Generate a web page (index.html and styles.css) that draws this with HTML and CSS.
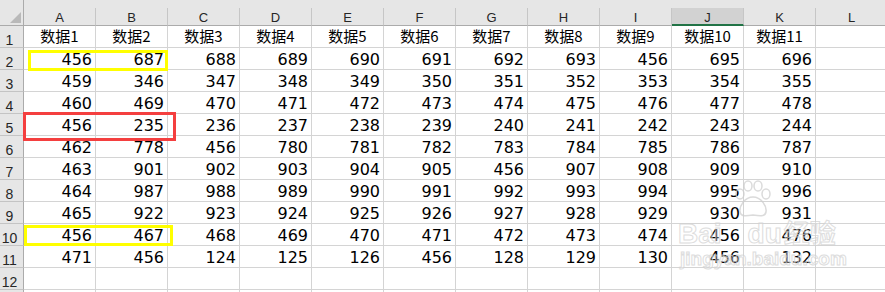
FILE: index.html
```html
<!DOCTYPE html>
<html lang="zh">
<head>
<meta charset="utf-8">
<title>Sheet</title>
<link rel="stylesheet" href="styles.css">
</head>
<body>
<div class="sheet">
  <div class="hrow">
    <div class="corner"><svg width="24" height="26" viewBox="0 0 24 26"><polygon points="21,12 21,23 10,23" fill="#b9b9b9"/></svg></div>
    <div class="ch">A</div><div class="ch">B</div><div class="ch">C</div><div class="ch">D</div><div class="ch">E</div><div class="ch">F</div><div class="ch">G</div><div class="ch">H</div><div class="ch">I</div><div class="ch sel">J</div><div class="ch">K</div><div class="ch">L</div>
  </div>
  <div class="row"><div class="rh">1</div><div class="c t">数据1</div><div class="c t">数据2</div><div class="c t">数据3</div><div class="c t">数据4</div><div class="c t">数据5</div><div class="c t">数据6</div><div class="c t">数据7</div><div class="c t">数据8</div><div class="c t">数据9</div><div class="c t">数据10</div><div class="c t">数据11</div><div class="c"></div></div>
  <div class="row"><div class="rh">2</div><div class="c">456</div><div class="c">687</div><div class="c">688</div><div class="c">689</div><div class="c">690</div><div class="c">691</div><div class="c">692</div><div class="c">693</div><div class="c">456</div><div class="c">695</div><div class="c">696</div><div class="c"></div></div>
  <div class="row"><div class="rh">3</div><div class="c">459</div><div class="c">346</div><div class="c">347</div><div class="c">348</div><div class="c">349</div><div class="c">350</div><div class="c">351</div><div class="c">352</div><div class="c">353</div><div class="c">354</div><div class="c">355</div><div class="c"></div></div>
  <div class="row"><div class="rh">4</div><div class="c">460</div><div class="c">469</div><div class="c">470</div><div class="c">471</div><div class="c">472</div><div class="c">473</div><div class="c">474</div><div class="c">475</div><div class="c">476</div><div class="c">477</div><div class="c">478</div><div class="c"></div></div>
  <div class="row"><div class="rh">5</div><div class="c">456</div><div class="c">235</div><div class="c">236</div><div class="c">237</div><div class="c">238</div><div class="c">239</div><div class="c">240</div><div class="c">241</div><div class="c">242</div><div class="c">243</div><div class="c">244</div><div class="c"></div></div>
  <div class="row"><div class="rh">6</div><div class="c">462</div><div class="c">778</div><div class="c">456</div><div class="c">780</div><div class="c">781</div><div class="c">782</div><div class="c">783</div><div class="c">784</div><div class="c">785</div><div class="c">786</div><div class="c">787</div><div class="c"></div></div>
  <div class="row"><div class="rh">7</div><div class="c">463</div><div class="c">901</div><div class="c">902</div><div class="c">903</div><div class="c">904</div><div class="c">905</div><div class="c">456</div><div class="c">907</div><div class="c">908</div><div class="c">909</div><div class="c">910</div><div class="c"></div></div>
  <div class="row"><div class="rh">8</div><div class="c">464</div><div class="c">987</div><div class="c">988</div><div class="c">989</div><div class="c">990</div><div class="c">991</div><div class="c">992</div><div class="c">993</div><div class="c">994</div><div class="c">995</div><div class="c">996</div><div class="c"></div></div>
  <div class="row"><div class="rh">9</div><div class="c">465</div><div class="c">922</div><div class="c">923</div><div class="c">924</div><div class="c">925</div><div class="c">926</div><div class="c">927</div><div class="c">928</div><div class="c">929</div><div class="c">930</div><div class="c">931</div><div class="c"></div></div>
  <div class="row"><div class="rh">10</div><div class="c">456</div><div class="c">467</div><div class="c">468</div><div class="c">469</div><div class="c">470</div><div class="c">471</div><div class="c">472</div><div class="c">473</div><div class="c">474</div><div class="c">456</div><div class="c">476</div><div class="c"></div></div>
  <div class="row"><div class="rh">11</div><div class="c">471</div><div class="c">456</div><div class="c">124</div><div class="c">125</div><div class="c">126</div><div class="c">456</div><div class="c">128</div><div class="c">129</div><div class="c">130</div><div class="c">456</div><div class="c">132</div><div class="c"></div></div>
  <div class="row"><div class="rh">12</div><div class="c"></div><div class="c"></div><div class="c"></div><div class="c"></div><div class="c"></div><div class="c"></div><div class="c"></div><div class="c"></div><div class="c"></div><div class="c"></div><div class="c"></div><div class="c"></div></div>
  <div class="row"><div class="rh"></div><div class="c"></div><div class="c"></div><div class="c"></div><div class="c"></div><div class="c"></div><div class="c"></div><div class="c"></div><div class="c"></div><div class="c"></div><div class="c"></div><div class="c"></div><div class="c"></div></div>

  <div class="box box-y1"></div>
  <div class="box box-r"></div>
  <div class="box box-y2"></div>

  <div class="wm">
    <svg class="paw" width="44" height="40" viewBox="0 0 44 40">
      <g fill="none" stroke="#cfcfcf" stroke-width="1.5">
        <ellipse cx="9" cy="14" rx="4" ry="5"/>
        <ellipse cx="17" cy="6" rx="4" ry="5"/>
        <ellipse cx="27" cy="6" rx="4" ry="5"/>
        <ellipse cx="35" cy="14" rx="4" ry="5"/>
        <path d="M22 17 C14 17 8 26 9 32 C10 37 16 36 22 35 C28 36 34 37 35 32 C36 26 30 17 22 17 Z"/>
      </g>
    </svg>
    <div class="wm-line1"><span class="wm-bai">Bai</span><span class="wm-du">du</span><span class="wm-jy">经验</span></div>
    <div class="wm-line2">jingyan.baidu.com</div>
  </div>
</div>
</body>
</html>
```

FILE: styles.css
```css
html, body {
  margin: 0;
  padding: 0;
  background: #ffffff;
}

.sheet {
  position: relative;
  width: 885px;
  height: 292px;
  overflow: hidden;
  font-family: "DejaVu Sans", sans-serif;
}

.hrow {
  display: flex;
  align-items: flex-end;
  height: 26px;
  background: #e6e6e6;
}

.corner {
  flex: 0 0 24px;
  width: 24px;
  height: 26px;
  box-sizing: border-box;
  border-right: 1px solid #ababab;
  border-bottom: 1px solid #ababab;
}

.corner svg {
  display: block;
}

.ch {
  flex: 0 0 72px;
  width: 72px;
  height: 18px;
  box-sizing: border-box;
  border-right: 1px solid #c6c6c6;
  border-bottom: 1px solid #ababab;
  text-align: center;
  font-family: "Liberation Sans", Arial, sans-serif;
  font-size: 13px;
  line-height: 16px;
  padding-top: 2px;
  color: #262626;
}

.ch.sel {
  background: #d2d2d2;
  border-bottom: 2px solid #217346;
}

.row {
  display: flex;
  height: 22px;
}

.rh {
  flex: 0 0 24px;
  width: 24px;
  height: 22px;
  box-sizing: border-box;
  background: #e6e6e6;
  border-right: 1px solid #ababab;
  border-bottom: 1px solid #c4c4c4;
  padding-right: 4px;
  padding-top: 7px;
  text-align: center;
  font-family: "Liberation Sans", Arial, sans-serif;
  font-size: 14px;
  line-height: 14px;
  color: #262626;
}

.c {
  flex: 0 0 72px;
  width: 72px;
  height: 22px;
  box-sizing: border-box;
  border-right: 1px solid #d4d4d4;
  border-bottom: 1px solid #d4d4d4;
  text-align: right;
  padding-right: 3px;
  padding-top: 3px;
  font-size: 16px;
  line-height: 18px;
  color: #000000;
  white-space: nowrap;
}

.c.t {
  text-align: center;
  padding-right: 0;
  padding-top: 0;
  font-family: "Noto Sans CJK SC", "Noto Sans", sans-serif;
  font-size: 15px;
  line-height: 20px;
}

.box {
  position: absolute;
  box-sizing: border-box;
  border: 3px solid #ffff00;
}

.box-y1 {
  left: 28px;
  top: 50px;
  width: 140px;
  height: 21px;
}

.box-r {
  left: 23px;
  top: 112px;
  width: 153px;
  height: 29px;
  border-color: #f43f3f;
}

.box-y2 {
  left: 24px;
  top: 225px;
  width: 149px;
  height: 21px;
}

.wm {
  position: absolute;
  left: 678px;
  top: 178px;
  width: 170px;
  height: 100px;
  opacity: 0.75;
  pointer-events: none;
}

.paw {
  position: absolute;
  left: 53px;
  top: 2px;
}

.wm-line1 {
  position: absolute;
  left: 0;
  top: 38px;
  white-space: nowrap;
  font-family: "Liberation Sans", Arial, sans-serif;
  font-weight: bold;
  font-size: 28px;
  line-height: 32px;
  color: rgba(255, 255, 255, 0.4);
  -webkit-text-stroke: 1px #d2d2d2;
}

.wm-du {
  margin-left: 26px;
}

.wm-jy {
  font-family: "Noto Sans CJK SC", sans-serif;
  font-weight: bold;
  font-size: 26px;
  margin-left: 2px;
}

.wm-line2 {
  position: absolute;
  left: 2px;
  top: 70px;
  white-space: nowrap;
  font-family: "Liberation Sans", Arial, sans-serif;
  font-weight: bold;
  font-size: 19px;
  line-height: 22px;
  color: rgba(255, 255, 255, 0.4);
  -webkit-text-stroke: 1px #d2d2d2;
}
```
